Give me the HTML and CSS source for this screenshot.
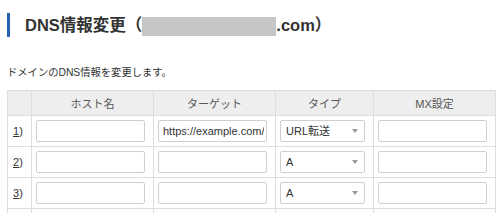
FILE: index.html
```html
<!DOCTYPE html>
<html lang="ja">
<head>
    <meta charset="UTF-8">
    <title>DNS情報変更</title>
    <link rel="stylesheet" href="styles.css">
</head>
<body>
    <div class="page">
        <h1 class="titulo">DNS情報変更（<span class="oculto"></span>.com）</h1>
        <p class="lead">ドメインのDNS情報を変更します。</p>

        <!-- Tabla de registros DNS -->
        <table class="dns">
            <colgroup>
                <col class="c-num">
                <col class="c-host">
                <col class="c-target">
                <col class="c-type">
                <col class="c-mx">
            </colgroup>
            <thead>
                <tr>
                    <th></th>
                    <th>ホスト名</th>
                    <th>ターゲット</th>
                    <th>タイプ</th>
                    <th>MX設定</th>
                </tr>
            </thead>
            <tbody>
                <tr>
                    <td class="num"><u>1</u>)</td>
                    <td><input type="text" class="campo"></td>
                    <td><input type="text" class="campo" value="https://example.com/"></td>
                    <td><div class="sel"><select><option>URL転送</option><option>A</option></select></div></td>
                    <td><input type="text" class="campo"></td>
                </tr>
                <tr>
                    <td class="num"><u>2</u>)</td>
                    <td><input type="text" class="campo"></td>
                    <td><input type="text" class="campo"></td>
                    <td><div class="sel"><select><option>A</option><option>URL転送</option></select></div></td>
                    <td><input type="text" class="campo"></td>
                </tr>
                <tr>
                    <td class="num"><u>3</u>)</td>
                    <td><input type="text" class="campo"></td>
                    <td><input type="text" class="campo"></td>
                    <td><div class="sel"><select><option>A</option><option>URL転送</option></select></div></td>
                    <td><input type="text" class="campo"></td>
                </tr>
                <tr>
                    <td class="num"><u>4</u>)</td>
                    <td><input type="text" class="campo"></td>
                    <td><input type="text" class="campo"></td>
                    <td><div class="sel"><select><option>A</option><option>URL転送</option></select></div></td>
                    <td><input type="text" class="campo"></td>
                </tr>
            </tbody>
        </table>
    </div>
</body>
</html>
```

FILE: styles.css
```css
/* Estilos generales */
body {
    margin: 0;
    background-color: #ffffff;
    color: #333333;
    font-family: "Liberation Sans", "Noto Sans CJK JP", sans-serif;
}

.page {
    padding: 13px 4px 0 7px;
}

.titulo {
    margin: 0;
    border-left: 3px solid #2a5fb4;
    padding-left: 15px;
    font-size: 16.5px;
    line-height: 24px;
    font-weight: bold;
    color: #333333;
}

.oculto {
    display: inline-block;
    width: 134px;
    height: 19px;
    background-color: #c6c6c6;
    vertical-align: -5px;
}

.lead {
    margin: 28px 0 9px;
    font-size: 10.3px;
    line-height: 16px;
}

/* Estilos para la tabla */
.dns {
    width: 489px;
    border-collapse: collapse;
    table-layout: fixed;
}

.c-num { width: 24px; }
.c-host { width: 122px; }
.c-target { width: 122px; }
.c-type { width: 98px; }
.c-mx { width: 122px; }

.dns th, .dns td {
    border: 1px solid #dddddd;
}

.dns th {
    height: 24px;
    padding: 0;
    background-color: #eeeeee;
    color: #555555;
    font-size: 11px;
    font-weight: normal;
    text-align: center;
}

.dns td {
    height: 22px;
    padding: 4px 8px 4px 4px;
}

.dns td.num {
    padding: 0 0 0 5px;
    font-size: 11px;
}

.campo {
    display: block;
    width: 100%;
    height: 22px;
    margin: 0;
    padding: 0 2px 0 4px;
    box-sizing: border-box;
    border: 1px solid #cfcfcf;
    border-radius: 2px;
    background-color: #ffffff;
    font-family: inherit;
    font-size: 11px;
    color: #333333;
}

.sel {
    position: relative;
}

.sel select {
    display: block;
    width: 100%;
    height: 22px;
    margin: 0;
    padding: 0 5px;
    box-sizing: border-box;
    border: 1px solid #cfcfcf;
    border-radius: 2px;
    background-color: #ffffff;
    -webkit-appearance: none;
    appearance: none;
    font-family: inherit;
    font-size: 11px;
    color: #333333;
}

.sel::after {
    content: "";
    position: absolute;
    right: 7px;
    top: 9px;
    border-left: 3px solid transparent;
    border-right: 3px solid transparent;
    border-top: 4px solid #9a9a9a;
}
```
